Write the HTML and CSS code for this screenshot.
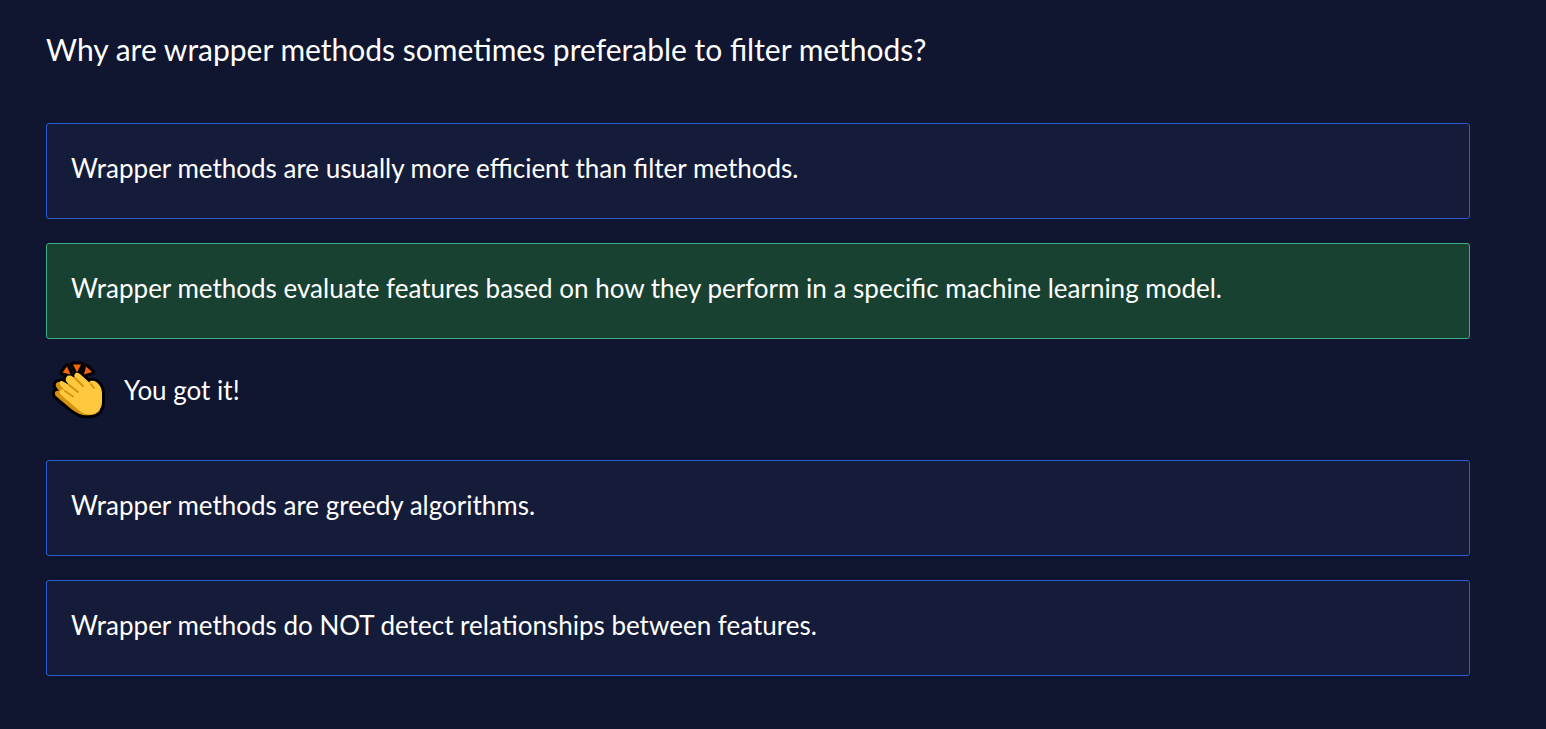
FILE: index.html
```html
<!DOCTYPE html>
<html lang="en">
<head>
<meta charset="utf-8">
<meta name="viewport" content="width=device-width, initial-scale=1">
<title>Quiz</title>
<link rel="stylesheet" href="styles.css">
</head>
<body>
<main class="quiz">
  <h1 class="question" id="question">Why are wrapper methods sometimes preferable to filter methods?</h1>
  <div class="options" role="group" aria-labelledby="question">
    <button type="button" class="option">Wrapper methods are usually more efficient than filter methods.</button>
    <button type="button" class="option option-correct">Wrapper methods evaluate features based on how they perform in a specific machine learning model.</button>
    <div class="feedback" role="status">
      <svg class="clap" viewBox="0 0 80 80" aria-hidden="true">
        <defs>
          <path id="back" d="M17 47 C13 44 15 40 19 41 L17 38 C14 35 17 30 21 33 L44 48 L60 60 C57 65 49 66 43 65 C38 64 34 61 30 58 L17 47Z"/>
          <path id="front" d="M20 41 C21 39 23 39 25 41 L20 35 C18 31 21 30 24 32 L29 35 L26 31 C25 26 29 24 33 27 L35 28 C33 24 36 21 40 24 L51 34 C48 32 50 30 54 31 C58 32 62 37 62 43 L62 52 C62 60 56 65 49 64.500 C43 64.500 39 60 35 57 L21 45 C20 44 19 42 20 41Z"/>
          <path id="sparks" d="M22.500 22.500 L27 16.500 L30.500 24.500Z M33 14.500 L41 14.500 L37 22.500Z M46 16.500 L52 22 L44 24.500Z"/>
        </defs>
        <g class="clap-outline"><use href="#back"/><use href="#front"/><use href="#sparks"/></g>
        <use href="#back" class="clap-back"/>
        <use href="#front" class="clap-front"/>
        <path class="clap-lines" d="M25 41 L33 46.500 M29 35 L38 42 M35 28 L43 36 M51 34 L54 38"/>
        <use href="#sparks" class="clap-sparks"/>
      </svg>
      <p class="feedback-text">You got it!</p>
    </div>
    <button type="button" class="option">Wrapper methods are greedy algorithms.</button>
    <button type="button" class="option">Wrapper methods do NOT detect relationships between features.</button>
  </div>
</main>
</body>
</html>
```
FILE: styles.css
```css
* {
  box-sizing: border-box;
}

body {
  margin: 0;
  background: #10162f;
  color: #fff;
  font-family: Lato, "Open Sans", sans-serif;
}

.quiz {
  padding: 29px 76px 52px 46px;
}

.question {
  margin: 0 0 54px;
  font-size: 30px;
  font-weight: 400;
  line-height: 40px;
}

.options {
  display: flex;
  flex-direction: column;
  gap: 24px;
}

.option {
  padding: 25px 24px 31px;
  border: 1px solid #2a5bd0;
  border-radius: 3px;
  background: #151c39;
  color: inherit;
  font: inherit;
  font-size: 26px;
  line-height: 38px;
  text-align: left;
  cursor: pointer;
}

.option-correct {
  border-color: #40ad84;
  background: #184132;
}

.feedback {
  display: flex;
  align-items: center;
  gap: 4px;
  margin: -13px 0 6px -6px;
}

.clap {
  width: 80px;
  height: 80px;
  flex: none;
}

.clap-outline {
  fill: #000;
  stroke: #000;
  stroke-width: 6;
  stroke-linejoin: round;
}

.clap-back {
  fill: #d6920f;
}

.clap-front {
  fill: #ffc83d;
}

.clap-lines {
  fill: none;
  stroke: #d6920f;
  stroke-width: 2;
  stroke-linecap: round;
}

.clap-sparks {
  fill: #f7630c;
}

.feedback-text {
  margin: 0;
  font-size: 26px;
  line-height: 38px;
}
```
